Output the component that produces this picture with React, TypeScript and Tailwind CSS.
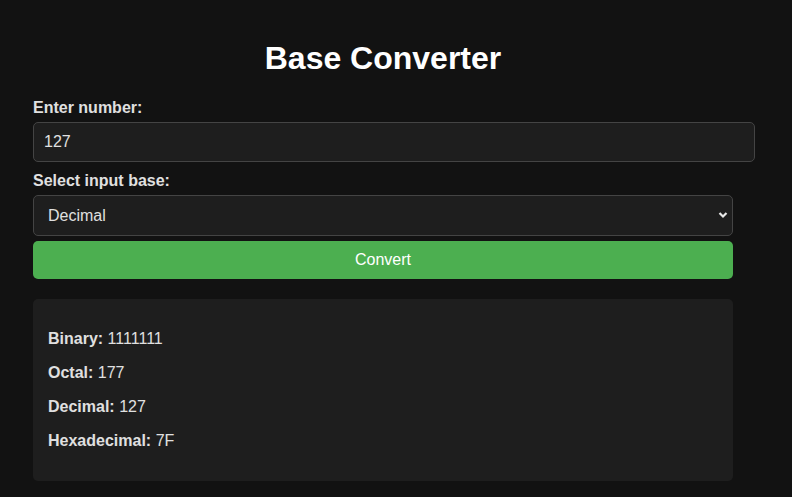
import { useState } from 'react'

const BASES = [
  { value: '2', label: 'Binary' },
  { value: '8', label: 'Octal' },
  { value: '10', label: 'Decimal' },
  { value: '16', label: 'Hexadecimal' },
]

export default function App() {
  const [num, setNum] = useState('127')
  const [base, setBase] = useState('10')
  const [result, setResult] = useState<number | null>(127)

  const convert = () => {
    const n = parseInt(num, Number(base))
    setResult(isNaN(n) ? null : n)
  }

  return (
    <div className="min-h-screen bg-[#121212] text-[#e0e0e0] font-['Liberation_Sans',Arial,sans-serif] text-base leading-[18px]">
      <div className="w-[700px] ml-[33px] pt-[40px] pb-4">
        <h1 className="text-[32px] leading-[36px] font-bold text-white text-center mb-[23px]">Base Converter</h1>

        <label className="block font-bold mb-[5px]">Enter number:</label>
        <input
          value={num}
          onChange={(e) => setNum(e.target.value)}
          className="block box-content w-full h-[18px] px-[10px] py-[10px] mb-[10px] bg-[#1e1e1e] border border-[#444] rounded-[5px] text-[#e0e0e0] outline-none"
        />

        <label className="block font-bold mb-[5px]">Select input base:</label>
        <div className="relative mb-[5px]">
          <select
            value={base}
            onChange={(e) => setBase(e.target.value)}
            className="block w-full h-[41px] appearance-none pl-[14px] pr-8 bg-[#1e1e1e] border border-[#444] rounded-[5px] text-[#e0e0e0] outline-none"
          >
            {BASES.map((b) => (
              <option key={b.value} value={b.value}>{b.label}</option>
            ))}
          </select>
          <svg className="absolute right-[5px] top-[16px] pointer-events-none" width="10" height="8" viewBox="0 0 10 8">
            <path d="M1.5 2 L5 5.5 L8.5 2" stroke="#e8e8e8" strokeWidth="2.2" fill="none" />
          </svg>
        </div>

        <button
          onClick={convert}
          className="block w-full h-[38px] bg-[#4caf50] text-white rounded-[5px] cursor-pointer"
        >
          Convert
        </button>

        <div className="mt-[20px] bg-[#1e1e1e] rounded-[5px] px-[15px] py-[15px]">
          {result === null ? (
            <p className="my-4">Invalid number</p>
          ) : (
            <>
              <p className="my-4"><strong>Binary:</strong> {result.toString(2)}</p>
              <p className="my-4"><strong>Octal:</strong> {result.toString(8)}</p>
              <p className="my-4"><strong>Decimal:</strong> {result.toString(10)}</p>
              <p className="my-4"><strong>Hexadecimal:</strong> {result.toString(16).toUpperCase()}</p>
            </>
          )}
        </div>
      </div>
    </div>
  )
}
